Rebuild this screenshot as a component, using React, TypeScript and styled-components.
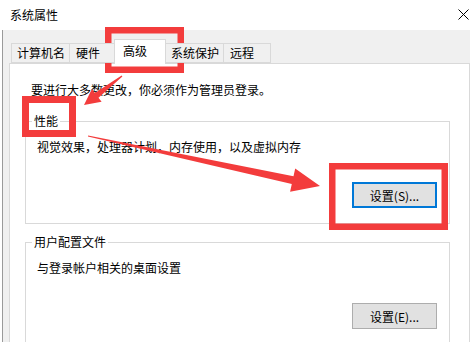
import React from 'react';
import styled, { createGlobalStyle } from 'styled-components';

const GlobalStyle = createGlobalStyle`
    html, body {
        margin: 0;
        padding: 0;
        background: #ffffff;
    }
    body {
        width: 470px;
        height: 342px;
        overflow: hidden;
        font-family: "Noto Sans CJK SC", "Noto Sans", sans-serif;
        font-size: 12px;
        color: #000000;
    }
`;

const TABS = ['计算机名', '硬件', '高级', '系统保护', '远程'];
const ACTIVE = '高级';

type Pt = [number, number];

// 锥形箭头：尾部细，接近箭头处变粗
function arrowPoints(tail: Pt, tip: Pt, headLen: number, headHalf: number, shaftHalf: number) {
    const dx = tip[0] - tail[0];
    const dy = tip[1] - tail[1];
    const len = Math.hypot(dx, dy);
    const ux = dx / len;
    const uy = dy / len;
    const nx = -uy;
    const ny = ux;
    const bx = tip[0] - ux * headLen;
    const by = tip[1] - uy * headLen;
    const pts: Pt[] = [
        [tail[0] + nx * 0.6, tail[1] + ny * 0.6],
        [bx + nx * shaftHalf, by + ny * shaftHalf],
        [bx + nx * headHalf, by + ny * headHalf],
        tip,
        [bx - nx * headHalf, by - ny * headHalf],
        [bx - nx * shaftHalf, by - ny * shaftHalf],
        [tail[0] - nx * 0.6, tail[1] - ny * 0.6],
    ];
    return pts.map((p) => `${p[0].toFixed(1)},${p[1].toFixed(1)}`).join(' ');
}

function Annotations() {
    const red = '#f33c3c';
    return (
        <Overlay width={470} height={342} viewBox="0 0 470 342">
            <rect x={108.25} y={30.25} width={72.5} height={39.5} fill="none" stroke={red} strokeWidth={6.5} />
            <rect x={25.5} y={99.5} width={47} height={34} fill="none" stroke={red} strokeWidth={7} />
            <rect x={332.25} y={166.25} width={112.5} height={60.5} fill="none" stroke={red} strokeWidth={6.5} />
            <polygon points={arrowPoints([122, 76], [84, 105], 16, 8, 3)} fill={red} />
            <polygon points={arrowPoints([88, 136], [320, 186], 28, 12, 4)} fill={red} />
        </Overlay>
    );
}

function App() {
    return (
        <>
            <GlobalStyle />
            <Window>
                <TitleBar>
                    <span>系统属性</span>
                    <svg width="11" height="11" viewBox="0 0 11 11">
                        <path d="M0.5 0.5 L10.5 10.5 M10.5 0.5 L0.5 10.5" stroke="#000" strokeWidth="1" />
                    </svg>
                </TitleBar>
                <Frame>
                    <TabRow>
                        {TABS.map((t) => (
                            <Tab key={t} $active={t === ACTIVE}>
                                {t}
                            </Tab>
                        ))}
                    </TabRow>
                    <Panel>
                        <Notice>要进行大多数更改，你必须作为管理员登录。</Notice>
                        <Group>
                            <legend>性能</legend>
                            <Desc>视觉效果，处理器计划，内存使用，以及虚拟内存</Desc>
                            <ButtonRow>
                                <Button $default>设置(S)...</Button>
                            </ButtonRow>
                        </Group>
                        <Group $gap={10}>
                            <legend>用户配置文件</legend>
                            <Desc>与登录帐户相关的桌面设置</Desc>
                            <ButtonRow>
                                <Button>设置(E)...</Button>
                            </ButtonRow>
                        </Group>
                    </Panel>
                </Frame>
                <Annotations />
            </Window>
        </>
    );
}

export default App;

const Window = styled.div`
    position: relative;
    width: 470px;
    height: 342px;
    overflow: hidden;
    display: flex;
    flex-direction: column;
`;

const TitleBar = styled.div`
    height: 30px;
    flex: none;
    display: flex;
    align-items: center;
    justify-content: space-between;
    padding: 0 1px 0 10px;
    background: #ffffff;
    line-height: 16px;
    svg {
        display: block;
        margin-top: -1px;
    }
`;

const Frame = styled.div`
    flex: 1;
    min-height: 0;
    margin-left: 2px;
    border-left: 1px solid #9a9a9a;
    background: #f0f0f0;
    padding: 9px 0 0 6px;
    display: flex;
    flex-direction: column;
`;

const TabRow = styled.div`
    display: flex;
    align-items: flex-end;
    height: 24px;
    padding-left: 2px;
    flex: none;
`;

const Tab = styled.div<{ $active?: boolean }>`
    box-sizing: border-box;
    display: flex;
    align-items: center;
    height: ${(p) => (p.$active ? '25px' : '20px')};
    min-width: ${(p) => (p.$active ? '52px' : '48px')};
    padding: ${(p) => (p.$active ? '0 4px 3px 8px' : '0 4px 0 6px')};
    margin: ${(p) => (p.$active ? '0 -2px -1px -2px' : '0 -1px 0 0')};
    border: 1px solid #d9d9d9;
    border-bottom: ${(p) => (p.$active ? 'none' : '1px solid #d9d9d9')};
    background: ${(p) => (p.$active ? '#ffffff' : '#f0f0f0')};
    position: relative;
    z-index: ${(p) => (p.$active ? 2 : 1)};
    line-height: 16px;
    white-space: nowrap;
    &:first-child {
        padding-left: 5px;
    }
`;

const Panel = styled.div`
    flex: 1;
    background: #ffffff;
    border: 1px solid #d9d9d9;
    padding: 18px 19px 0 15px;
`;

const Notice = styled.div`
    line-height: 16px;
    margin-left: 6px;
`;

const Group = styled.fieldset<{ $gap?: number }>`
    margin: ${(p) => p.$gap ?? 15}px 0 0 0;
    padding: 0 12px 15px 6px;
    border: 1px solid #d9d9d9;
    min-width: 0;
    legend {
        padding: 0 2px;
        margin: 0;
        line-height: 16px;
        font-size: 12px;
    }
`;

const Desc = styled.div`
    line-height: 16px;
    margin: 10px 0 0 5px;
`;

const ButtonRow = styled.div`
    display: flex;
    justify-content: flex-end;
    margin-top: 27px;
`;

const Button = styled.button<{ $default?: boolean }>`
    box-sizing: border-box;
    width: 85px;
    height: 26px;
    padding: 0;
    font-family: inherit;
    font-size: 12px;
    color: #000000;
    background: #e1e1e1;
    border: ${(p) => (p.$default ? '2px solid #0078d7' : '1px solid #adadad')};
    border-radius: 0;
`;

const Overlay = styled.svg`
    position: absolute;
    top: 0;
    left: 0;
    pointer-events: none;
`;
